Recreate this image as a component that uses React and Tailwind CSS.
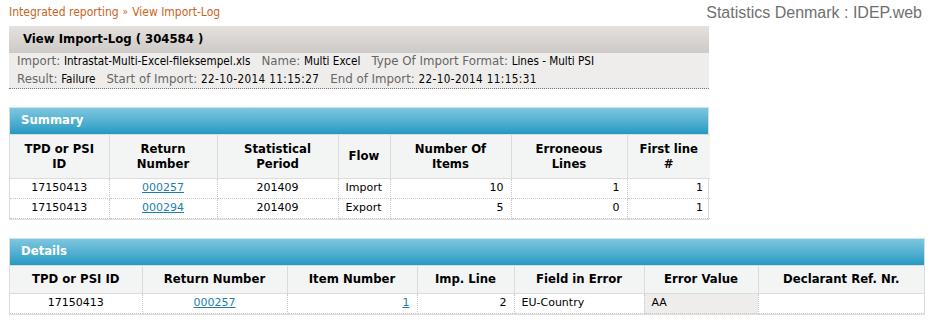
import React from "react";

const F = { fontFamily: '"DejaVu Sans", Verdana, sans-serif' };
const C = { fontFamily: '"DejaVu Sans Condensed", "DejaVu Sans", Tahoma, sans-serif' };

function Label({ children }) {
  return <span className="text-[11.8px] text-[#666]">{children}</span>;
}
function Val({ children, wide }) {
  return (
    <span className={"text-[11.6px] text-black " + (wide ? "tracking-[0.4px]" : "")} style={C}>
      {children}
    </span>
  );
}
function Gap() {
  return <span className="inline-block w-[11px]" />;
}

function BlueBar({ children }) {
  return (
    <div className="h-[27px] flex items-center px-[11px] text-white font-bold text-[11.7px] bg-gradient-to-b from-[#7cc7df] to-[#1f9ac2] border-t border-[#cfe6ee]">
      {children}
    </div>
  );
}

const th = "border border-[#dcdcdc] bg-[#f3f5f5] font-bold text-[11.7px] text-black text-center leading-[15px] px-1";
const td = "border border-dotted border-[#c8c8c8] text-[11px] text-black h-[20px] px-[7px] py-0";

export default function App() {
  return (
    <div className="w-[941px] h-[322px] bg-white relative" style={F}>
      <div className="flex justify-between items-start pl-[9px] pr-[19px] pt-[4px] h-[26px]">
        <div className="text-[12px] text-[#c8641e] leading-[16px] flex items-center gap-[4px]" style={C}>
          <span>Integrated reporting</span>
          <span className="text-[10px] text-[#c8641e]">»</span>
          <span>View Import-Log</span>
        </div>
        <div className="text-[16px] text-[#707070] leading-[18px]" style={{ fontFamily: '"Liberation Sans", Arial, sans-serif' }}>
          Statistics Denmark : IDEP.web
        </div>
      </div>

      <div className="ml-[9px] w-[700px]">
        <div className="h-[27px] bg-gradient-to-b from-[#e4e1df] to-[#cdc9c6] flex items-center pl-[14px] font-bold text-[11.7px] text-black">
          View Import-Log ( 304584 )
        </div>
        <div className="bg-[#eeedeb] border-b border-dotted border-[#777] pl-[8px]">
          <div className="h-[18px] flex items-center whitespace-pre">
            <Label>Import: </Label><Val>Intrastat-Multi-Excel-fileksempel.xls</Val>
            <Gap />
            <Label>Name: </Label><Val>Multi Excel</Val>
            <Gap />
            <Label>Type Of Import Format: </Label><Val>Lines - Multi PSI</Val>
          </div>
          <div className="h-[17px] flex items-center whitespace-pre">
            <Label>Result: </Label><Val>Failure</Val>
            <Gap />
            <Label>Start of Import: </Label><Val wide>22-10-2014 11:15:27</Val>
            <Gap />
            <Label>End of Import: </Label><Val wide>22-10-2014 11:15:31</Val>
          </div>
        </div>
      </div>

      <div className="ml-[9px] mt-[18px] w-[700px] border-l border-r border-b border-[#dcdcdc]">
        <BlueBar>Summary</BlueBar>
        <table className="w-full border-collapse table-fixed">
          <colgroup>
            <col className="w-[99px]" />
            <col className="w-[108px]" />
            <col className="w-[121px]" />
            <col className="w-[52px]" />
            <col className="w-[121px]" />
            <col className="w-[116px]" />
            <col className="w-[83px]" />
          </colgroup>
          <thead>
            <tr className="h-[44px]">
              <th className={th + " border-l-0"}>TPD or PSI<br />ID</th>
              <th className={th}>Return<br />Number</th>
              <th className={th}>Statistical<br />Period</th>
              <th className={th}>Flow</th>
              <th className={th}>Number Of<br />Items</th>
              <th className={th}>Erroneous<br />Lines</th>
              <th className={th + " border-r-0"}>First line<br />#</th>
            </tr>
          </thead>
          <tbody>
            {[
              ["17150413", "000257", "201409", "Import", "10", "1", "1"],
              ["17150413", "000294", "201409", "Export", "5", "0", "1"],
            ].map((r, i) => (
              <tr key={i}>
                <td className={td + " text-center border-l-0"}>{r[0]}</td>
                <td className={td + " text-center"}>
                  <a className="text-[#1d7fb0] underline">{r[1]}</a>
                </td>
                <td className={td + " text-center"}>{r[2]}</td>
                <td className={td + " text-left px-[3px]"}>{r[3]}</td>
                <td className={td + " text-right"}>{r[4]}</td>
                <td className={td + " text-right"}>{r[5]}</td>
                <td className={td + " text-right border-r-0"}>{r[6]}</td>
              </tr>
            ))}
          </tbody>
        </table>
      </div>

      <div className="ml-[9px] mt-[18px] w-[916px] border-l border-r border-b border-[#dcdcdc]">
        <BlueBar>Details</BlueBar>
        <table className="w-full border-collapse table-fixed">
          <colgroup>
            <col className="w-[132px]" />
            <col className="w-[145px]" />
            <col className="w-[130px]" />
            <col className="w-[97px]" />
            <col className="w-[130px]" />
            <col className="w-[114px]" />
            <col className="w-[166px]" />
          </colgroup>
          <thead>
            <tr className="h-[28px]">
              <th className={th + " border-l-0"}>TPD or PSI ID</th>
              <th className={th}>Return Number</th>
              <th className={th}>Item Number</th>
              <th className={th}>Imp. Line</th>
              <th className={th}>Field in Error</th>
              <th className={th + " bg-[#eeedeb]"}>Error Value</th>
              <th className={th + " border-r-0"}>Declarant Ref. Nr.</th>
            </tr>
          </thead>
          <tbody>
            <tr>
              <td className={td + " text-center border-l-0"}>17150413</td>
              <td className={td + " text-center"}>
                <a className="text-[#1d7fb0] underline">000257</a>
              </td>
              <td className={td + " text-right"}>
                <a className="text-[#1d7fb0] underline">1</a>
              </td>
              <td className={td + " text-right"}>2</td>
              <td className={td + " text-left px-[3px]"}>EU-Country</td>
              <td className={td + " text-left bg-[#eeedeb] px-[3px]"}>AA</td>
              <td className={td + " border-r-0"}></td>
            </tr>
          </tbody>
        </table>
      </div>
    </div>
  );
}
